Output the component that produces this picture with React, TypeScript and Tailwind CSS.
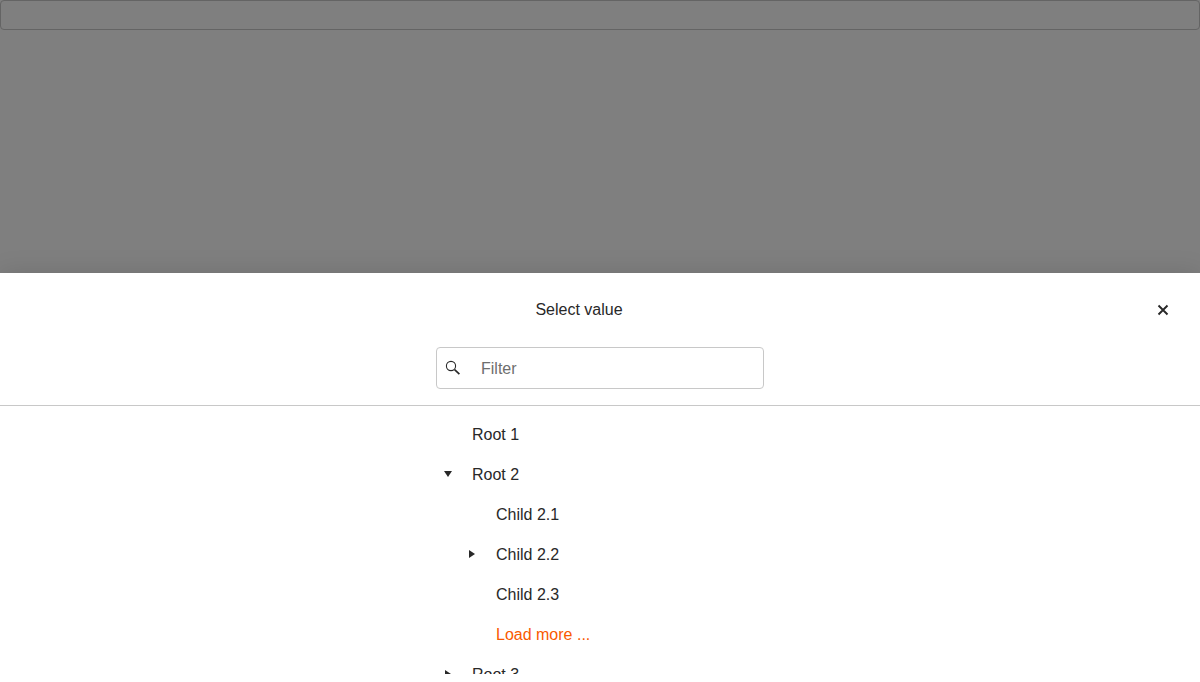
import { useState } from "react";

type Node = {
  label: string;
  level: 0 | 1;
  toggle?: "open" | "closed";
  more?: boolean;
};

const nodes: Node[] = [
  { label: "Root 1", level: 0 },
  { label: "Root 2", level: 0, toggle: "open" },
  { label: "Child 2.1", level: 1 },
  { label: "Child 2.2", level: 1, toggle: "closed" },
  { label: "Child 2.3", level: 1 },
  { label: "Load more ...", level: 1, more: true },
  { label: "Root 3", level: 0, toggle: "closed" },
];

function SearchIcon() {
  return (
    <svg viewBox="0 0 16 16" className="size-4" fill="none" stroke="currentColor" aria-hidden="true">
      <circle cx="6" cy="6" r="4.6" strokeWidth="1.1" />
      <path d="M9.6 9.6 14.4 14.2" strokeWidth="1.7" />
    </svg>
  );
}

function CloseIcon() {
  return (
    <svg viewBox="0 0 16 16" className="size-4" fill="none" stroke="currentColor" strokeWidth="1.9" aria-hidden="true">
      <path d="M3.5 3.5 12.5 12.5M12.5 3.5 3.5 12.5" />
    </svg>
  );
}

function Arrow({ open }: { open: boolean }) {
  return (
    <svg viewBox="0 0 16 16" className="size-4" fill="currentColor" aria-hidden="true">
      <path d={open ? "M4 5h8l-4 6z" : "M5 4v8l6-4z"} />
    </svg>
  );
}

function TreeRow({ node }: { node: Node }) {
  return (
    <li role="treeitem" className={`flex h-10 items-center ${node.level === 1 ? "pl-6" : ""}`}>
      {node.toggle ? (
        <button type="button" aria-label={`Toggle ${node.label}`} className="flex h-10 w-6 items-center justify-center">
          <Arrow open={node.toggle === "open"} />
        </button>
      ) : (
        <span className="w-6" />
      )}
      <button type="button" className={`h-full flex-1 px-3 pt-0.5 text-left ${node.more ? "text-[#f95a00]" : ""}`}>
        {node.label}
      </button>
    </li>
  );
}

export default function App() {
  const [filter, setFilter] = useState("");

  return (
    <div className="flex h-screen flex-col overflow-hidden bg-[#7f7f7f] font-['Liberation_Sans',Arial,sans-serif] text-base leading-6 text-[#282828]">
      <div className="min-h-0 flex-1">
        <button
          type="button"
          aria-label="Open value list"
          className="block h-[30px] w-full rounded border border-[#646464]"
        />
      </div>
      <section role="dialog" aria-labelledby="sheet-title" className="flex h-[60vh] flex-col bg-white pb-2 shadow-[0_0_24px_rgba(0,0,0,0.12)]">
        <header className="flex flex-col gap-4 border-b border-[#c8c8c8] p-4">
          <div className="flex items-center">
            <h1 id="sheet-title" className="flex-1 text-center">Select value</h1>
            <button type="button" aria-label="Close" className="flex size-[42px] items-center justify-center">
              <CloseIcon />
            </button>
          </div>
          <label className="mx-auto flex h-[42px] w-full max-w-[328px] items-center rounded border border-[#c8c8c8] px-2">
            <SearchIcon />
            <input
              type="text"
              aria-label="Filter"
              placeholder="Filter"
              value={filter}
              onChange={(event) => setFilter(event.target.value)}
              className="ml-5 h-full min-w-0 flex-1 pt-0.5 outline-none placeholder:text-[#6e6e6e]"
            />
          </label>
        </header>
        <div className="min-h-0 flex-1 overflow-hidden pt-2">
          <ul role="tree" className="mx-auto w-full max-w-[328px]">
            {nodes.map((node) => (
              <TreeRow key={node.label} node={node} />
            ))}
          </ul>
        </div>
      </section>
    </div>
  );
}
